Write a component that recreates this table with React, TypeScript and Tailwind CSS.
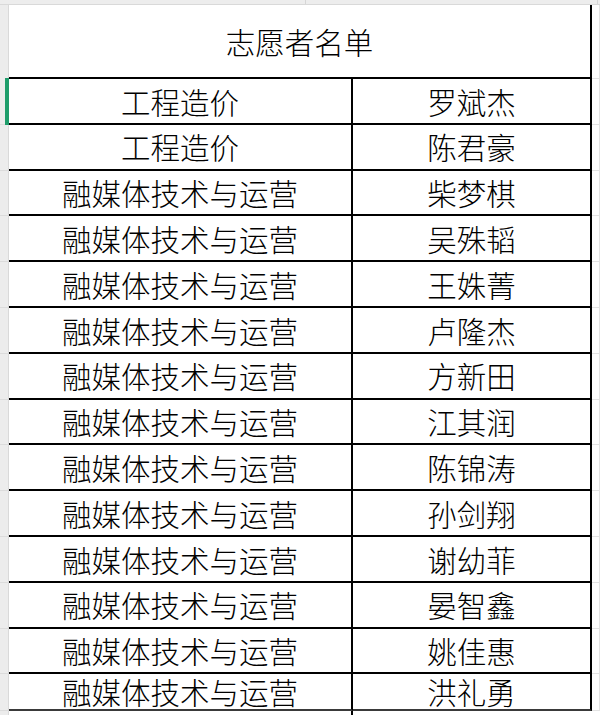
import React from "react";

const rows: [string, string][] = [
  ["工程造价", "罗斌杰"],
  ["工程造价", "陈君豪"],
  ["融媒体技术与运营", "柴梦棋"],
  ["融媒体技术与运营", "吴殊韬"],
  ["融媒体技术与运营", "王姝菁"],
  ["融媒体技术与运营", "卢隆杰"],
  ["融媒体技术与运营", "方新田"],
  ["融媒体技术与运营", "江其润"],
  ["融媒体技术与运营", "陈锦涛"],
  ["融媒体技术与运营", "孙剑翔"],
  ["融媒体技术与运营", "谢幼菲"],
  ["融媒体技术与运营", "晏智鑫"],
  ["融媒体技术与运营", "姚佳惠"],
  ["融媒体技术与运营", "洪礼勇"],
];

const font = "font-['Noto_Sans_CJK_SC','Noto_Sans',sans-serif]";

export default function App() {
  return (
    <div className={`w-[600px] h-[715px] overflow-hidden bg-white text-black font-light ${font}`}>
      {/* top strip */}
      <div className="flex h-[5px] bg-[#ededed] border-b border-[#d9d9d9]">
        <div className="w-[306px] border-r border-[#d6d6d6]" />
        <div className="w-[292px] border-r border-[#d6d6d6]" />
        <div className="flex-1" />
      </div>

      {/* header row */}
      <div className="flex h-[74px]">
        <div className="w-[9px] bg-[#ececec] border-r border-[#d9d9d9]" />
        <div className="w-[583px] border-r-2 border-b-2 border-black flex items-center justify-center pt-[2px]">
          <span className="text-[29.5px] leading-none">志愿者名单</span>
        </div>
        <div className="flex-1 border-b border-[#e3e3e3] border-r border-r-[#e3e3e3]" />
      </div>

      {rows.map(([major, name], i) => {
        const last = i === rows.length - 1;
        return (
          <div key={i} className={`flex ${last ? "h-[36.6px]" : "h-[45.8px]"}`}>
            <div className="relative w-[9px] bg-[#ececec] border-r border-[#d9d9d9] border-b border-b-[#dcdcdc]">
              {i === 0 && (
                <div className="absolute left-[5px] top-[-1px] bottom-[-1px] w-[4px] bg-[#1f9d6b]" />
              )}
            </div>
            <div
              className={`w-[344px] border-r-2 border-b-2 flex items-center justify-center pt-[1px] ${
                last ? "border-b-[#3a3a3a] border-r-black" : "border-black"
              }`}
            >
              <span className="text-[29.5px] leading-none">{major}</span>
            </div>
            <div
              className={`w-[239px] border-r-2 border-b-2 flex items-center justify-center pt-[1px] ${
                last ? "border-b-[#3a3a3a] border-r-black" : "border-black"
              }`}
            >
              <span className="text-[29.5px] leading-none">{name}</span>
            </div>
            <div className="flex-1 border-b border-[#e3e3e3] border-r border-r-[#e3e3e3]" />
          </div>
        );
      })}
      <div className="flex h-[10px]">
        <div className="w-[9px] bg-[#ececec] border-r border-[#d9d9d9]" />
        <div className="w-[344px] border-r-2 border-black" />
        <div className="flex-1" />
      </div>
    </div>
  );
}
